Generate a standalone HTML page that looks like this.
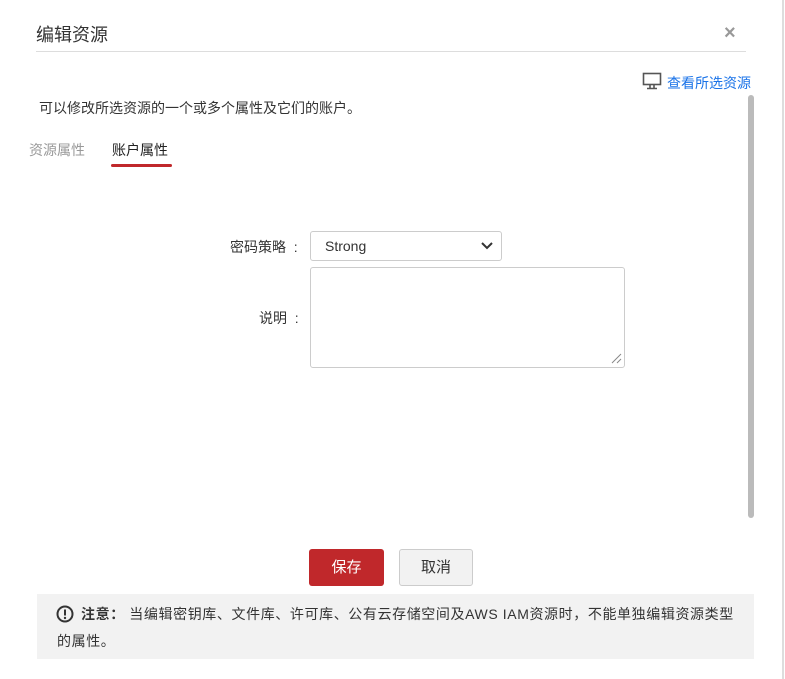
<!DOCTYPE html>
<html><head><meta charset="utf-8"><style>
*{box-sizing:border-box;margin:0;padding:0}
body{width:785px;height:679px;background:#fff;font-family:"Liberation Sans","Noto Sans CJK SC",sans-serif;color:#333;position:relative;overflow:hidden}
.a{position:absolute;white-space:nowrap}
</style></head><body>
<div class="a" style="left:36px;top:21px;font-size:18px;color:#333">编辑资源</div>
<div class="a" style="left:724px;top:22px;font-size:20px;color:#999;font-weight:bold">×</div>
<div class="a" style="left:36px;top:51px;width:710px;height:1px;background:#ddd"></div>
<div class="a" style="left:782px;top:0;width:2px;height:679px;background:#ddd"></div>
<svg class="a" style="left:642px;top:72px" width="20" height="18" viewBox="0 0 20 18"><rect x="1.5" y="1.5" width="17" height="11" fill="none" stroke="#555" stroke-width="1.6"/><path d="M8 13v3M12 13v3M5 16.5h10" stroke="#555" stroke-width="1.6"/></svg>
<div class="a" style="left:667px;top:73px;font-size:14px;color:#1a73e8">查看所选资源</div>
<div class="a" style="left:748px;top:95px;width:6px;height:423px;background:#bbb;border-radius:3px"></div>
<div class="a" style="left:39px;top:98px;font-size:14px;color:#333">可以修改所选资源的一个或多个属性及它们的账户。</div>
<div class="a" style="left:29px;top:140px;font-size:14px;color:#999">资源属性</div>
<div class="a" style="left:112px;top:140px;font-size:14px;color:#222">账户属性</div>
<div class="a" style="left:111px;top:164px;width:61px;height:3px;background:#c0282b;border-radius:2px"></div>
<div class="a" style="left:230px;top:237px;font-size:14px">密码策略&nbsp;&nbsp;:</div>
<div class="a" style="left:310px;top:231px;width:192px;height:30px;border:1px solid #ccc;border-radius:3px;font-size:14px;padding:6px 14px">Strong</div>
<svg class="a" style="left:480px;top:240px" width="14" height="12" viewBox="0 0 14 12"><path d="M2 3l5 5 5-5" fill="none" stroke="#333" stroke-width="2"/></svg>
<div class="a" style="left:259px;top:308px;font-size:14px">说明&nbsp;&nbsp;:</div>
<div class="a" style="left:310px;top:267px;width:315px;height:101px;border:1px solid #ccc;border-radius:3px"></div>
<svg class="a" style="left:610px;top:352px" width="12" height="12"><path d="M11 2L2 11M11 7L7 11" stroke="#888" stroke-width="1"/></svg>
<div class="a" style="left:309px;top:549px;width:75px;height:37px;background:#c0282b;border-radius:3px;color:#fff;font-size:15px;text-align:center;line-height:37px">保存</div>
<div class="a" style="left:399px;top:549px;width:74px;height:37px;background:#f2f2f2;border:1px solid #ccc;border-radius:3px;color:#333;font-size:15px;text-align:center;line-height:35px">取消</div>
<div class="a" style="left:37px;top:594px;width:717px;height:65px;background:#f2f2f2"></div>
<svg class="a" style="left:56px;top:605px" width="18" height="18"><circle cx="9" cy="9" r="7.5" fill="none" stroke="#333" stroke-width="2"/><path d="M9 4.5v6" stroke="#333" stroke-width="2"/><circle cx="9" cy="13" r="1.2" fill="#333"/></svg>
<div class="a" style="left:57px;top:601px;font-size:14px;line-height:27px;color:#333;letter-spacing:0.6px"><span style="display:inline-block;width:24px"></span><b>注意：</b> 当编辑密钥库、文件库、许可库、公有云存储空间及AWS IAM资源时，不能单独编辑资源类型<br>的属性。</div>
</body></html>
